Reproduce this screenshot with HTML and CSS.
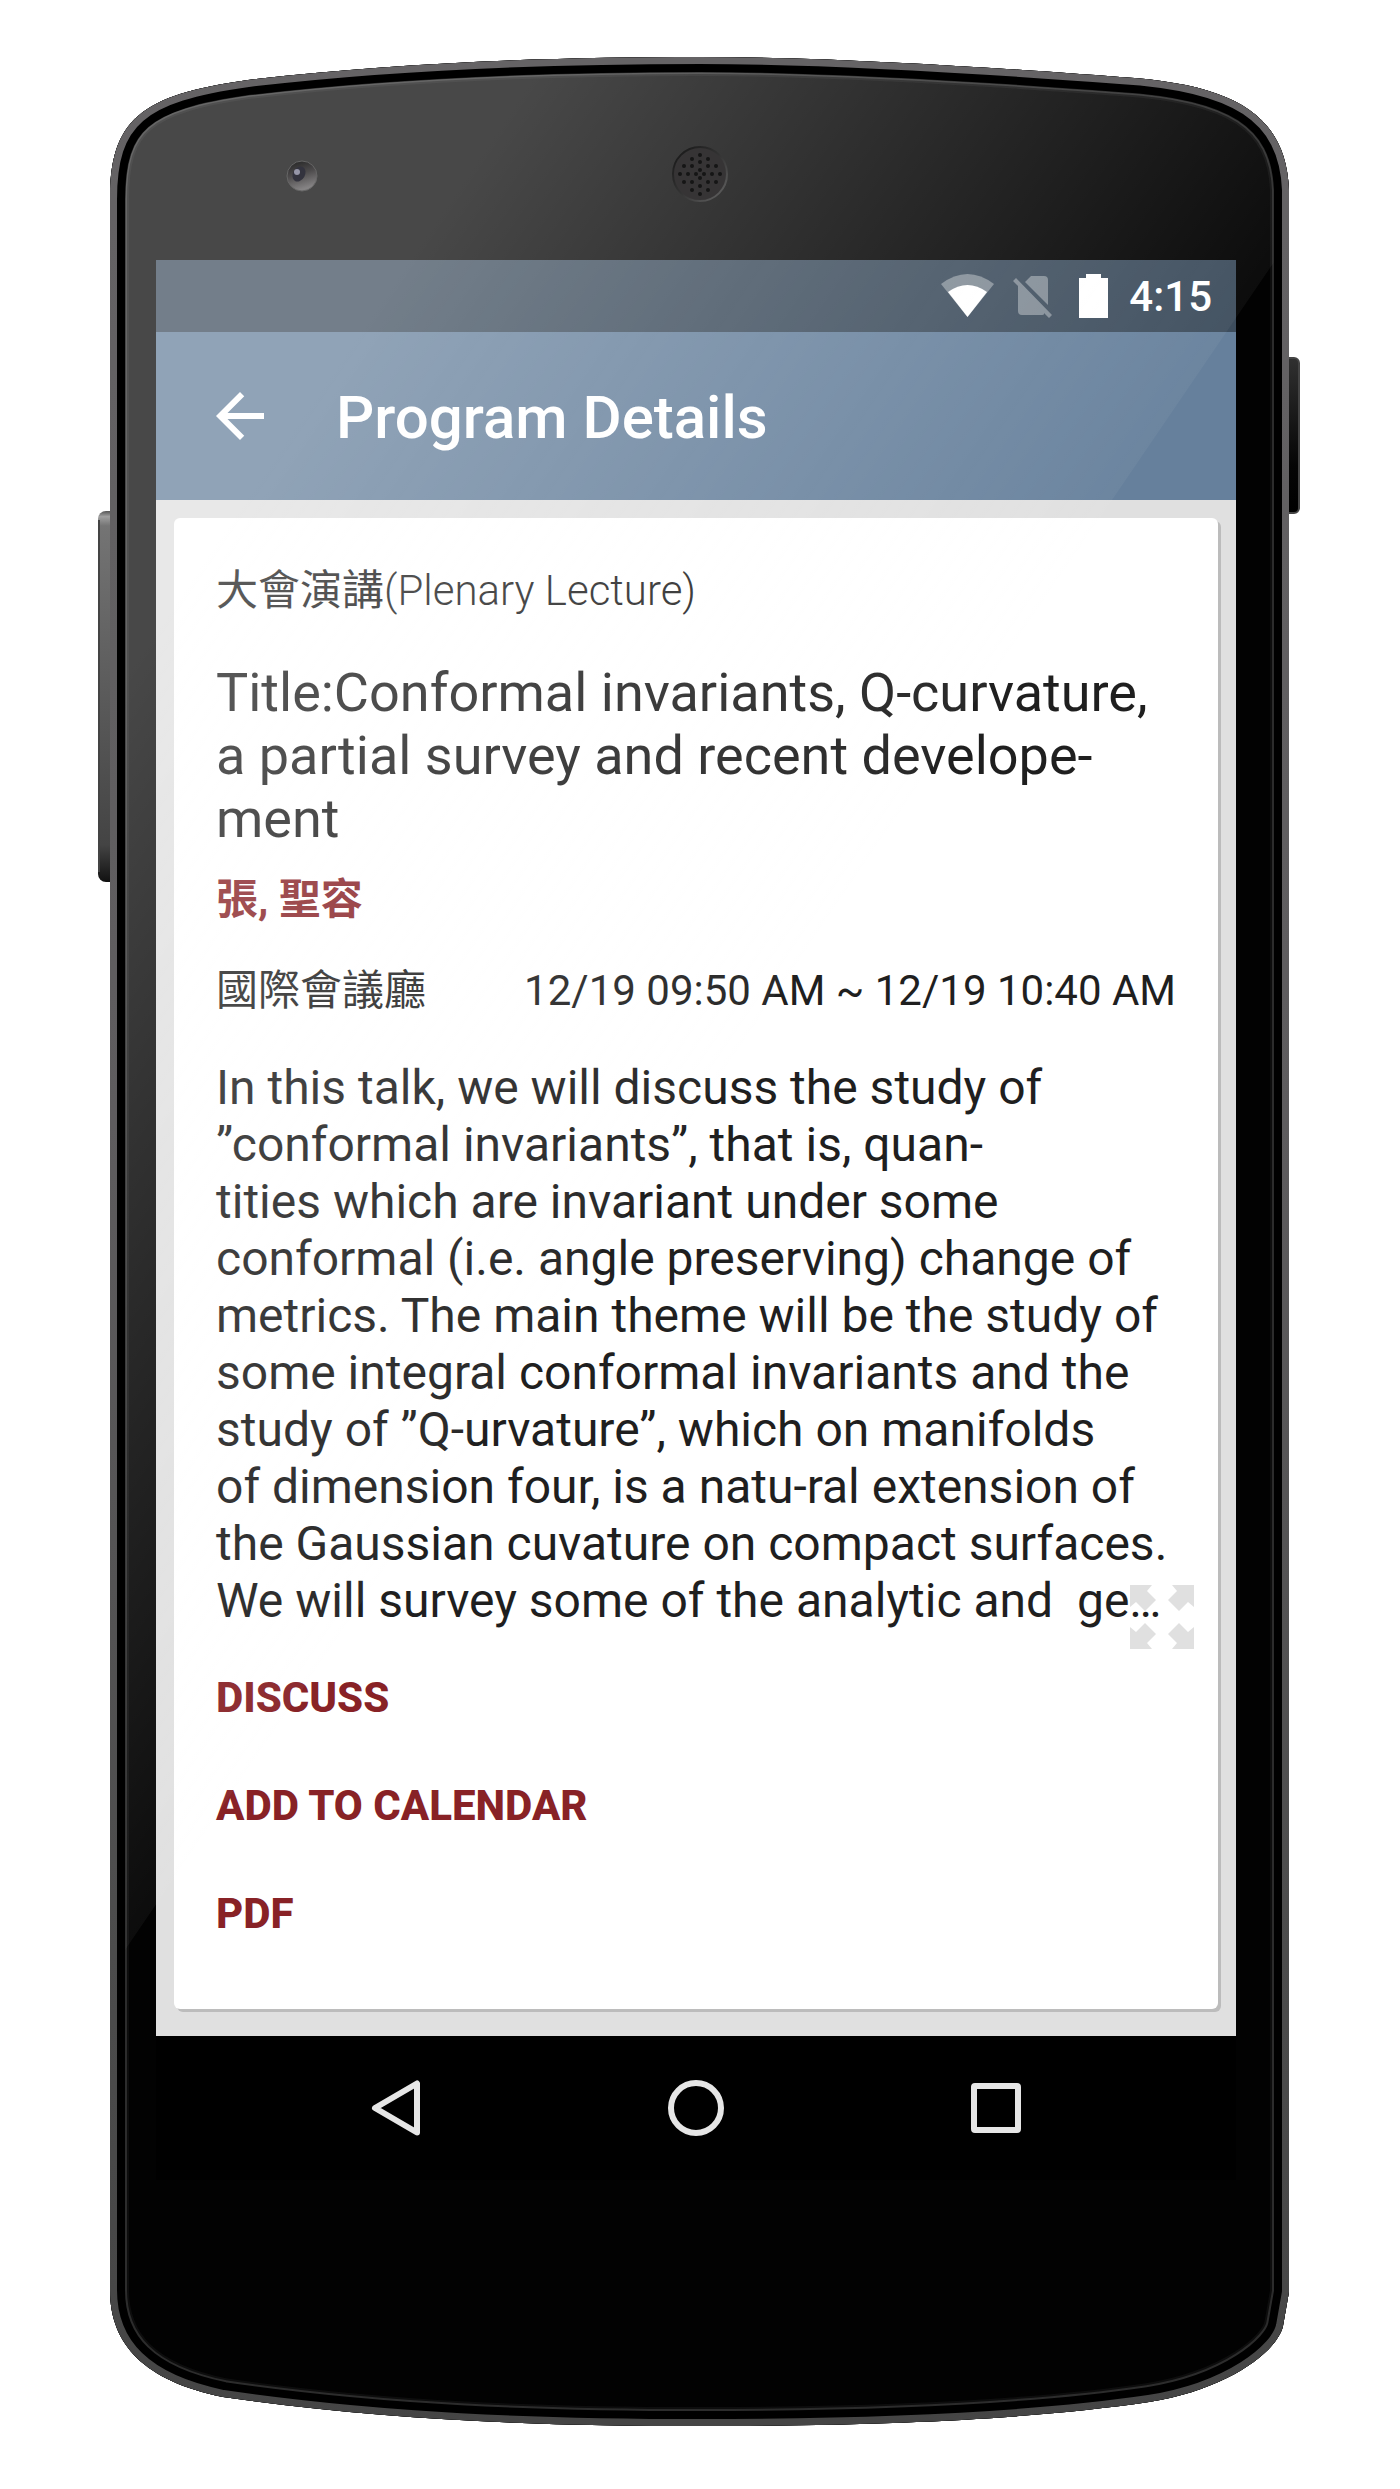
FILE: index.html
```html
<!DOCTYPE html>
<html lang="zh-Hant">
<head>
<meta charset="utf-8">
<meta name="viewport" content="width=device-width, initial-scale=1">
<title>Program Details</title>
<link rel="stylesheet" href="styles.css">
</head>
<body>
<div class="phone">
  <svg class="frame" viewBox="0 0 1400 2489" preserveAspectRatio="none" aria-hidden="true">
    <defs>
      <path id="body" d="M110 200C110 120 140 95 248 80C400 62 560 57 700 57C840 57 1000 68 1120 77C1235 84 1286 115 1289 190V2292L1283 2326C1278 2350 1230 2389 1149 2402C1040 2418 900 2426 700 2426C540 2426 380 2420 223 2397C145 2381 110 2345 110 2290Z"/>
      <clipPath id="bodyClip"><use href="#body"/></clipPath>
      <linearGradient id="rim" x1="0" y1="57" x2="0" y2="2426" gradientUnits="userSpaceOnUse">
        <stop offset="0" stop-color="#656365"/><stop offset=".45" stop-color="#5e5c5e"/><stop offset=".8" stop-color="#4c4c4c"/><stop offset="1" stop-color="#454545"/>
      </linearGradient>
      <linearGradient id="volume" x1="0" y1="0" x2="0" y2="1">
        <stop offset="0" stop-color="#555"/><stop offset=".015" stop-color="#a0a0a0"/><stop offset=".04" stop-color="#747474"/><stop offset=".9" stop-color="#444"/><stop offset="1" stop-color="#111"/>
      </linearGradient>
      <linearGradient id="power" x1="0" y1="0" x2="0" y2="1">
        <stop offset="0" stop-color="#303030"/><stop offset=".7" stop-color="#050505"/><stop offset="1" stop-color="#000"/>
      </linearGradient>
    </defs>
    <rect x="98" y="511" width="24" height="371" rx="8" fill="url(#volume)"/>
    <rect x="98" y="520" width="2" height="352" fill="#444"/>
    <rect x="1275" y="358" width="24" height="155" rx="5" fill="url(#power)" stroke="#444" stroke-width="2"/>
    <g clip-path="url(#bodyClip)">
      <use href="#body" fill="#020202"/>
      <use href="#body" fill="none" stroke="#0d0d0d" stroke-width="38"/>
      <use href="#body" fill="none" stroke="#2c2c2c" stroke-width="34"/>
      <use href="#body" fill="none" stroke="#000" stroke-width="30"/>
      <use href="#body" fill="none" stroke="url(#rim)" stroke-width="14"/>
    </g>
  </svg>

  <main class="screen">
    <div class="status">
      <svg class="status-icon" viewBox="0 0 63 44" role="img" aria-label="Wi-Fi">
        <path d="M31.500 43L5 10Q31.500-10 58 10Z" fill="#fff" fill-opacity=".35"/>
        <path d="M31.500 43L12 18Q31.500 4 51 18Z" fill="#fff"/>
      </svg>
      <svg class="status-icon" viewBox="0 0 63 44" role="img" aria-label="No SIM" fill="#fff" fill-opacity=".35">
        <path d="M32 2H45Q49 2 49 6V31L26 8ZM19 12L45 39V40Q45 41 43 41H23Q19 41 19 37ZM14 7L17 4L53 41L50 44L45 39L19 12Z"/>
      </svg>
      <svg class="status-icon" viewBox="0 0 63 44" role="img" aria-label="Battery">
        <path d="M24 0H39V4H46V44H17V4H24Z" fill="#fff"/>
      </svg>
      <time class="clock">4:15</time>
    </div>

    <header class="toolbar">
      <button class="back" type="button" aria-label="Back">
        <svg viewBox="0 0 24 24" width="72" height="72"><path d="M20 11H7.830L13.420 5.410L12 4L4 12L12 20L13.410 18.590L7.830 13H20Z" fill="#fff"/></svg>
      </button>
      <h1 class="heading">Program Details</h1>
    </header>

    <div class="content">
      <article class="card">
        <p class="category">大會演講<span class="category-en">(Plenary Lecture)</span></p>
        <h2 class="title">Title:Conformal invariants, Q-curvature,<br>a partial survey and recent develope-<br>ment</h2>
        <p class="speaker">張, 聖容</p>
        <div class="session">
          <span>國際會議廳</span>
          <span>12/19 09:50 AM ~ 12/19 10:40 AM</span>
        </div>
        <div class="abstract">
          <p class="abstract-text">In this talk, we will discuss the study of<br>”conformal invariants”, that is, quan-<br>tities which are invariant under some<br>conformal (i.e. angle preserving) change of<br>metrics. The main theme will be the study of<br>some integral conformal invariants and the<br>study of ”Q-urvature”, which on manifolds<br>of dimension four, is a natu-ral extension of<br>the Gaussian cuvature on compact surfaces.<br>We will survey some of the analytic and&nbsp; ge…</p>
          <button class="expand" type="button" aria-label="Expand">
            <svg viewBox="0 0 64 64" width="64" height="64" fill="#e0e0e0">
              <path d="M0 0H22L17 6L26 15L15 26L6 17L0 22ZM64 0V22L58 17L49 26L38 15L47 6L42 0ZM0 64V42L6 47L15 38L26 49L17 58L22 64ZM64 64H42L47 58L38 49L49 38L58 47L64 42Z"/>
            </svg>
          </button>
        </div>
        <nav class="actions">
          <a href="#discuss">DISCUSS</a>
          <a href="#calendar">ADD TO CALENDAR</a>
          <a href="#pdf">PDF</a>
        </nav>
      </article>
    </div>

    <div class="navbar">
      <button type="button" aria-label="Back"><svg viewBox="0 0 60 60" width="60" height="60"><path d="M51 5.500V54.500L9 30Z"/></svg></button>
      <button type="button" aria-label="Home"><svg viewBox="0 0 60 60" width="60" height="60"><circle cx="30" cy="30" r="25"/></svg></button>
      <button type="button" aria-label="Overview"><svg viewBox="0 0 60 60" width="60" height="60"><rect x="8" y="8" width="44" height="44" rx="1"/></svg></button>
    </div>
  </main>

  <svg class="gloss" viewBox="0 0 1400 2489" preserveAspectRatio="none" aria-hidden="true">
    <defs>
      <linearGradient id="sheen" gradientUnits="userSpaceOnUse" x1="397" y1="270" x2="993" y2="676">
        <stop offset="0" stop-color="#fff" stop-opacity=".28"/><stop offset="1" stop-color="#fff" stop-opacity=".045"/>
      </linearGradient>
      <mask id="face" maskUnits="userSpaceOnUse" x="0" y="0" width="1400" height="2489">
        <use href="#body" fill="#fff" stroke="#000" stroke-width="31"/>
      </mask>
      <linearGradient id="lens" x1="0" y1="0" x2=".3" y2="1">
        <stop offset="0" stop-color="#222"/><stop offset=".5" stop-color="#4c4a4b"/><stop offset="1" stop-color="#858384"/>
      </linearGradient>
      <linearGradient id="earEdge" x1="0" y1="0" x2="1" y2="1">
        <stop offset="0" stop-color="#151515"/><stop offset=".5" stop-color="#333"/><stop offset="1" stop-color="#666"/>
      </linearGradient>
    </defs>
    <path d="M100 40H1300V224L1274 262L125 1950L100 1987Z" fill="url(#sheen)" mask="url(#face)"/>
    <circle cx="302" cy="176" r="15" fill="url(#lens)" stroke="#666" stroke-width="1"/>
    <ellipse cx="299" cy="174" rx="6" ry="8" fill="#33333e" transform="rotate(30 299 174)"/>
    <circle cx="297" cy="172" r="3" fill="#9696a8"/>
    <circle cx="700" cy="174" r="27" fill="#363435" stroke="url(#earEdge)" stroke-width="2"/>
    <g fill="#151515">
      <circle cx="700" cy="155" r="2"/><circle cx="700" cy="162" r="2"/><circle cx="700" cy="170" r="2"/><circle cx="700" cy="178" r="2"/><circle cx="700" cy="186" r="2"/><circle cx="700" cy="194" r="2"/>
      <circle cx="680" cy="174" r="2"/><circle cx="688" cy="174" r="2"/><circle cx="696" cy="174" r="2"/><circle cx="704" cy="174" r="2"/><circle cx="712" cy="174" r="2"/><circle cx="720" cy="174" r="2"/>
      <circle cx="692" cy="159" r="2"/><circle cx="708" cy="159" r="2"/><circle cx="692" cy="190" r="2"/><circle cx="708" cy="190" r="2"/>
      <circle cx="684" cy="166" r="2"/><circle cx="716" cy="166" r="2"/><circle cx="684" cy="182" r="2"/><circle cx="716" cy="182" r="2"/>
      <circle cx="692" cy="166" r="2"/><circle cx="708" cy="166" r="2"/><circle cx="692" cy="182" r="2"/><circle cx="708" cy="182" r="2"/>
    </g>
  </svg>
</div>
</body>
</html>
```
FILE: styles.css
```css
* {
  box-sizing: border-box;
}

body {
  margin: 0;
  background: #fff;
  color: #1f1f1f;
  font-family: Roboto, "Noto Sans CJK TC", sans-serif;
  font-size: 42px;
  line-height: 50px;
}

h1,
h2,
p {
  margin: 0;
  font-weight: 400;
}

button {
  padding: 0;
  border: 0;
  background: none;
  cursor: pointer;
}

svg {
  display: block;
}

/* Device: the screen sits in the middle column, between frame and gloss */
.phone {
  position: relative;
  display: grid;
  grid-template-columns: minmax(0, 156fr) minmax(0, 1080fr) minmax(0, 164fr);
  padding: 260px 0 309px;
}

.frame,
.gloss {
  position: absolute;
  inset: 0;
  width: 100%;
  height: 100%;
}

.gloss {
  z-index: 2;
  pointer-events: none;
}

.screen {
  position: relative;
  z-index: 1;
  grid-column: 2;
  background: #e0e0e0;
}

.status {
  display: flex;
  align-items: center;
  justify-content: flex-end;
  height: 72px;
  padding-right: 24px;
  background: #3d4d5d;
  color: #fff;
}

.status-icon {
  width: 63px;
  height: 44px;
}

.clock {
  margin-left: 4px;
  padding-top: 2px;
  font-weight: 500;
}

.toolbar {
  display: flex;
  align-items: center;
  gap: 60px;
  height: 168px;
  padding: 0 48px;
  background: #66809c;
  color: #fff;
}

.heading {
  padding-top: 4px;
  font-size: 60px;
  font-weight: 500;
  line-height: 70px;
}

.content {
  padding: 18px 18px 27px;
}

.card {
  padding: 48px 42px 41px;
  border-radius: 6px;
  background: #fff;
  box-shadow: 3px 3px 0 #bcbcbc;
}

.category {
  margin-bottom: 45px;
}

.category-en {
  font-weight: 300;
}

.title {
  margin-bottom: 25px;
  font-size: 54px;
  line-height: 63px;
}

.speaker {
  margin-bottom: 41px;
  color: #882226;
  font-weight: 700;
}

.session {
  display: flex;
  justify-content: space-between;
  margin-bottom: 43px;
}

.abstract {
  position: relative;
  z-index: 0;
  margin-bottom: 15px;
}

.abstract-text {
  font-size: 48px;
  line-height: 57px;
}

.expand {
  position: absolute;
  right: -18px;
  bottom: -20px;
  z-index: -1;
}

.actions {
  display: flex;
  flex-direction: column;
  align-items: flex-start;
}

.actions a {
  color: #882226;
  font-weight: 800;
  line-height: 108px;
  text-decoration: none;
}

.navbar {
  display: flex;
  justify-content: center;
  height: 144px;
  background: #000;
}

.navbar button {
  display: flex;
  align-items: center;
  justify-content: center;
  width: 300px;
}

.navbar svg {
  fill: none;
  stroke: #e6e6e6;
  stroke-width: 6;
  stroke-linejoin: round;
}
```
